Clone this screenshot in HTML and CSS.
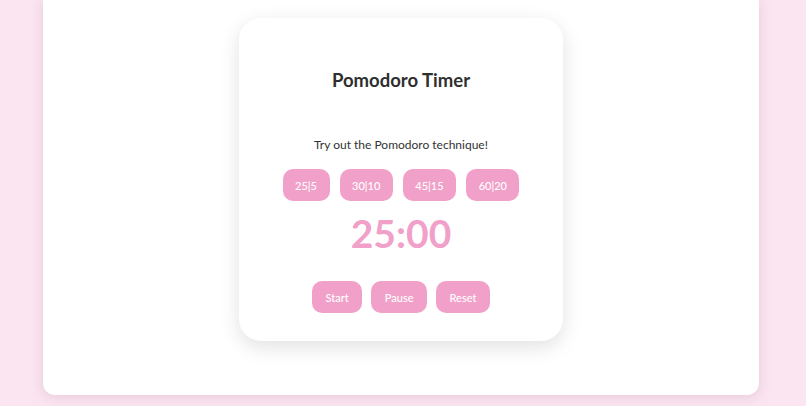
FILE: index.html
```html
<!DOCTYPE html>
<html lang="en">
<head>
<meta charset="utf-8">
<title>Pomodoro Timer</title>
<link rel="stylesheet" href="styles.css">
</head>
<body>
<div class="page">
  <div class="card">
    <h1 class="title">Pomodoro Timer</h1>
    <p class="subtitle">Try out the Pomodoro technique!</p>
    <div class="presets">
      <button class="btn">25|5</button>
      <button class="btn">30|10</button>
      <button class="btn">45|15</button>
      <button class="btn">60|20</button>
    </div>
    <div class="timer">25:00</div>
    <div class="controls">
      <button class="btn">Start</button>
      <button class="btn">Pause</button>
      <button class="btn">Reset</button>
    </div>
  </div>
</div>
</body>
</html>
```
FILE: styles.css
```css
html, body {
  margin: 0;
  padding: 0;
}
body {
  background: #fae5f0;
  font-family: Lato, "Open Sans", sans-serif;
  color: #333;
  height: 406px;
  overflow: hidden;
}
.page {
  margin: 0 47px 0 43px;
  height: 395px;
  background: #fff;
  border-radius: 0 0 12px 12px;
  box-shadow: 0 2px 12px rgba(200, 150, 175, 0.35);
  display: flex;
  justify-content: center;
  padding-top: 18px;
  box-sizing: border-box;
}
.card {
  width: 324px;
  height: 323px;
  box-sizing: border-box;
  background: #fff;
  border-radius: 22px;
  box-shadow: 0 6px 20px rgba(0, 0, 0, 0.12);
  display: flex;
  flex-direction: column;
  align-items: center;
  padding-top: 47px;
}
.title {
  margin: 0;
  font-size: 18.5px;
  line-height: 30px;
  font-weight: 700;
  color: #2f2f2f;
}
.subtitle {
  margin: 40px 0 0;
  font-size: 12px;
  line-height: 20px;
  color: #333;
}
.presets, .controls {
  display: flex;
  gap: 10px;
}
.presets {
  margin-top: 14px;
}
.controls {
  margin-top: 24px;
  gap: 9px;
}
.btn {
  height: 32px;
  padding: 0 12.5px;
  border: none;
  border-radius: 10px;
  background: #f1a1c9;
  color: #fff;
  font-family: inherit;
  font-size: 11px;
  font-weight: 500;
}
.controls .btn {
  padding: 0 13.5px;
}
.timer {
  margin-top: 8px;
  font-size: 39px;
  line-height: 48px;
  font-weight: 700;
  color: #f1a1c9;
}
```
